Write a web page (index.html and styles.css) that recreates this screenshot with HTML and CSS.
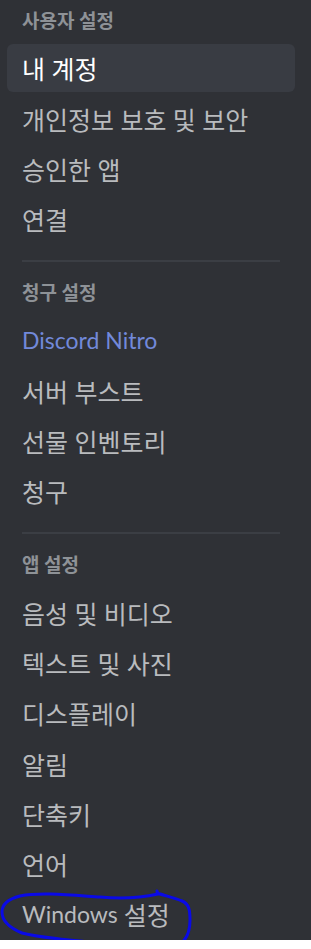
FILE: index.html
```html
<!DOCTYPE html>
<html lang="ko">
<head>
  <meta charset="UTF-8">
  <meta name="viewport" content="width=device-width, initial-scale=1.0">
  <title>사용자 설정</title>
  <link rel="stylesheet" href="styles.css">
</head>
<body>
  <nav class="sidebar">
    <!-- 사용자 설정 -->
    <div class="side-header">사용자 설정</div>
    <a class="side-item selected" href="#">내 계정</a>
    <a class="side-item" href="#">개인정보 보호 및 보안</a>
    <a class="side-item" href="#">승인한 앱</a>
    <a class="side-item" href="#">연결</a>
    <div class="separator"></div>

    <!-- 청구 설정 -->
    <div class="side-header">청구 설정</div>
    <a class="side-item nitro" href="#"><span class="latin">Discord Nitro</span></a>
    <a class="side-item" href="#">서버 부스트</a>
    <a class="side-item" href="#">선물 인벤토리</a>
    <a class="side-item" href="#">청구</a>
    <div class="separator"></div>

    <!-- 앱 설정 -->
    <div class="side-header">앱 설정</div>
    <a class="side-item" href="#">음성 및 비디오</a>
    <a class="side-item" href="#">텍스트 및 사진</a>
    <a class="side-item" href="#">디스플레이</a>
    <a class="side-item" href="#">알림</a>
    <a class="side-item" href="#">단축키</a>
    <a class="side-item" href="#">언어</a>
    <a class="side-item" href="#"><span class="latin">Windows&nbsp;</span>설정</a>
  </nav>

  <!-- 손으로 그린 동그라미 표시 -->
  <svg class="scribble" width="311" height="949" viewBox="0 0 311 949">
    <path d="M157,891 L158,894 C140,898 120,899 100,897 C70,895 40,892 20,896 C8,899 2,905 2,912 C2,921 10,928 22,933 C40,938 70,940 100,943 C130,946 160,949 178,945 C188,940 190,930 190,920 C190,910 189,904 182,901 C175,898 166,896 157,893"
      fill="none" stroke="#0a0ae6" stroke-width="3" stroke-linecap="round" stroke-linejoin="round"/>
  </svg>
</body>
</html>
```

FILE: styles.css
```css
/* 기본 */
html {
  background: #fff;
}
body {
  margin: 0;
  padding: 0;
  position: relative;
  font-family: Lato, "Noto Sans CJK KR", sans-serif;
}
/* 사이드바 */
.sidebar {
  background: #2f3136;
  height: 940px;
  padding: 0 16px 0 7px;
  box-sizing: border-box;
  display: flex;
  flex-direction: column;
}
.side-header {
  height: 42px;
  line-height: 42px;
  padding: 0 15px;
  font-size: 19px;
  font-weight: bold;
  color: #8e9297;
  flex-shrink: 0;
}
.side-item {
  height: 48px;
  margin-top: 2.3px;
  padding: 0 15px;
  display: flex;
  align-items: center;
  font-size: 25px;
  color: #b9bbbe;
  text-decoration: none;
  border-radius: 6px;
  flex-shrink: 0;
}
.side-item .latin {
  font-size: 23px;
}
.side-item.selected {
  background: #393c43;
  color: #fff;
}
.side-item.nitro {
  color: #7289da;
}
.separator {
  height: 2px;
  margin: 17px 15px 10px;
  background: #3b3e44;
  flex-shrink: 0;
}
/* 동그라미 */
.scribble {
  position: absolute;
  top: 0;
  left: 0;
  pointer-events: none;
}
```
